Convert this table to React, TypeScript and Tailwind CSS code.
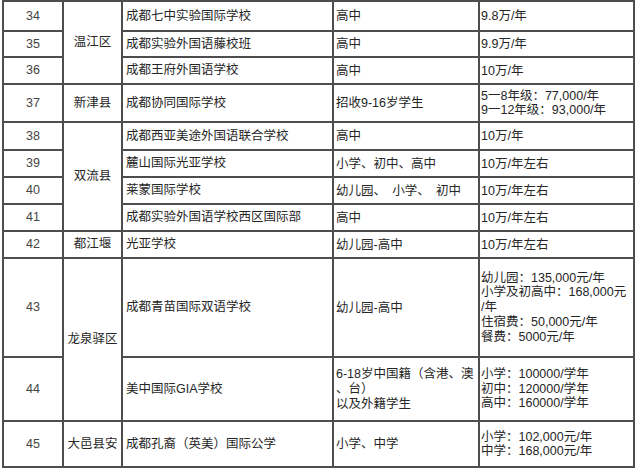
import React from "react";

type Row = {
  no: string;
  school: string;
  stage: string[];
  price: string[];
  stageLeading?: string;
  priceLeading?: string;
};

const rows: Row[] = [
  { no: "34", school: "成都七中实验国际学校", stage: ["高中"], price: ["9.8万/年"] },
  { no: "35", school: "成都实验外国语藤校班", stage: ["高中"], price: ["9.9万/年"] },
  { no: "36", school: "成都王府外国语学校", stage: ["高中"], price: ["10万/年"] },
  {
    no: "37",
    school: "成都协同国际学校",
    stage: ["招收9-16岁学生"],
    price: ["5一8年级：77,000/年", "9一12年级：93,000/年"],
    priceLeading: "leading-[14px]",
  },
  { no: "38", school: "成都西亚美途外国语联合学校", stage: ["高中"], price: ["10万/年"] },
  { no: "39", school: "麓山国际光亚学校", stage: ["小学、初中、高中"], price: ["10万/年左右"] },
  { no: "40", school: "莱蒙国际学校", stage: ["幼儿园、\u3000小学、\u3000初中"], price: ["10万/年左右"] },
  { no: "41", school: "成都实验外国语学校西区国际部", stage: ["高中"], price: ["10万/年左右"] },
  { no: "42", school: "光亚学校", stage: ["幼儿园-高中"], price: ["10万/年左右"] },
  {
    no: "43",
    school: "成都青苗国际双语学校",
    stage: ["幼儿园-高中"],
    price: [
      "幼儿园：135,000元/年",
      "小学及初高中：168,000元",
      "/年",
      "住宿费：50,000元/年",
      "餐费：5000元/年",
    ],
    priceLeading: "leading-[14.75px]",
  },
  {
    no: "44",
    school: "美中国际GIA学校",
    stage: ["6-18岁中国籍（含港、澳", "、台）", "以及外籍学生"],
    price: ["小学：100000/学年", "初中：120000/学年", "高中：160000/学年"],
    stageLeading: "leading-[15px]",
    priceLeading: "leading-[14.5px]",
  },
  {
    no: "45",
    school: "成都孔裔（英美）国际公学",
    stage: ["小学、中学"],
    price: ["小学：102,000元/年", "中学：168,000元/年"],
    priceLeading: "leading-[14px]",
  },
];

// district cells: first grid row and how many rows they cover
const districts = [
  { name: "温江区", row: 1, span: 3 },
  { name: "新津县", row: 4, span: 1 },
  { name: "双流县", row: 5, span: 4 },
  { name: "都江堰", row: 9, span: 1 },
  { name: "龙泉驿区", row: 10, span: 2 },
  { name: "大邑县安", row: 12, span: 1 },
];

const rowStart = [
  "row-start-1",
  "row-start-2",
  "row-start-3",
  "row-start-4",
  "row-start-5",
  "row-start-6",
  "row-start-7",
  "row-start-8",
  "row-start-9",
  "row-start-10",
  "row-start-11",
  "row-start-12",
];

const rowSpan: Record<number, string> = {
  1: "row-span-1",
  2: "row-span-2",
  3: "row-span-3",
  4: "row-span-4",
};

const Lines = ({ lines, leading }: { lines: string[]; leading?: string }) => (
  <div className={`flex flex-col whitespace-pre ${leading ?? "leading-[14px]"}`}>
    {lines.map((l, i) => (
      <span key={i}>{l}</span>
    ))}
  </div>
);

export default function App() {
  return (
    <div
      className="w-[640px] h-[472px] bg-white text-[#262626] text-[12.5px]"
      style={{ fontFamily: '"Liberation Sans", "Noto Sans CJK SC", sans-serif' }}
    >
      <div className="ml-[2px] inline-grid grid-cols-[58px_57px_209px_144px_153px] grid-rows-[28px_24px_25px_36px_26px_25px_25px_25px_25px_97px_62px_44px] gap-[2px] p-[2px] bg-[#4d4d4d]">
        {rows.map((r, i) => (
          <React.Fragment key={r.no}>
            <div
              className={`${rowStart[i]} col-start-1 bg-white flex items-center justify-center text-[#444]`}
            >
              {r.no}
            </div>
            <div className={`${rowStart[i]} col-start-3 bg-white flex items-center pl-[3px]`}>
              {r.school}
            </div>
            <div className={`${rowStart[i]} col-start-4 bg-white flex items-center pl-[2px]`}>
              <Lines lines={r.stage} leading={r.stageLeading} />
            </div>
            <div className={`${rowStart[i]} col-start-5 bg-white flex items-center pl-[1px]`}>
              <Lines lines={r.price} leading={r.priceLeading} />
            </div>
          </React.Fragment>
        ))}
        {districts.map((d) => (
          <div
            key={d.name}
            className={`${rowStart[d.row - 1]} ${rowSpan[d.span]} col-start-2 bg-white flex items-center justify-center`}
          >
            {d.name}
          </div>
        ))}
      </div>
    </div>
  );
}
